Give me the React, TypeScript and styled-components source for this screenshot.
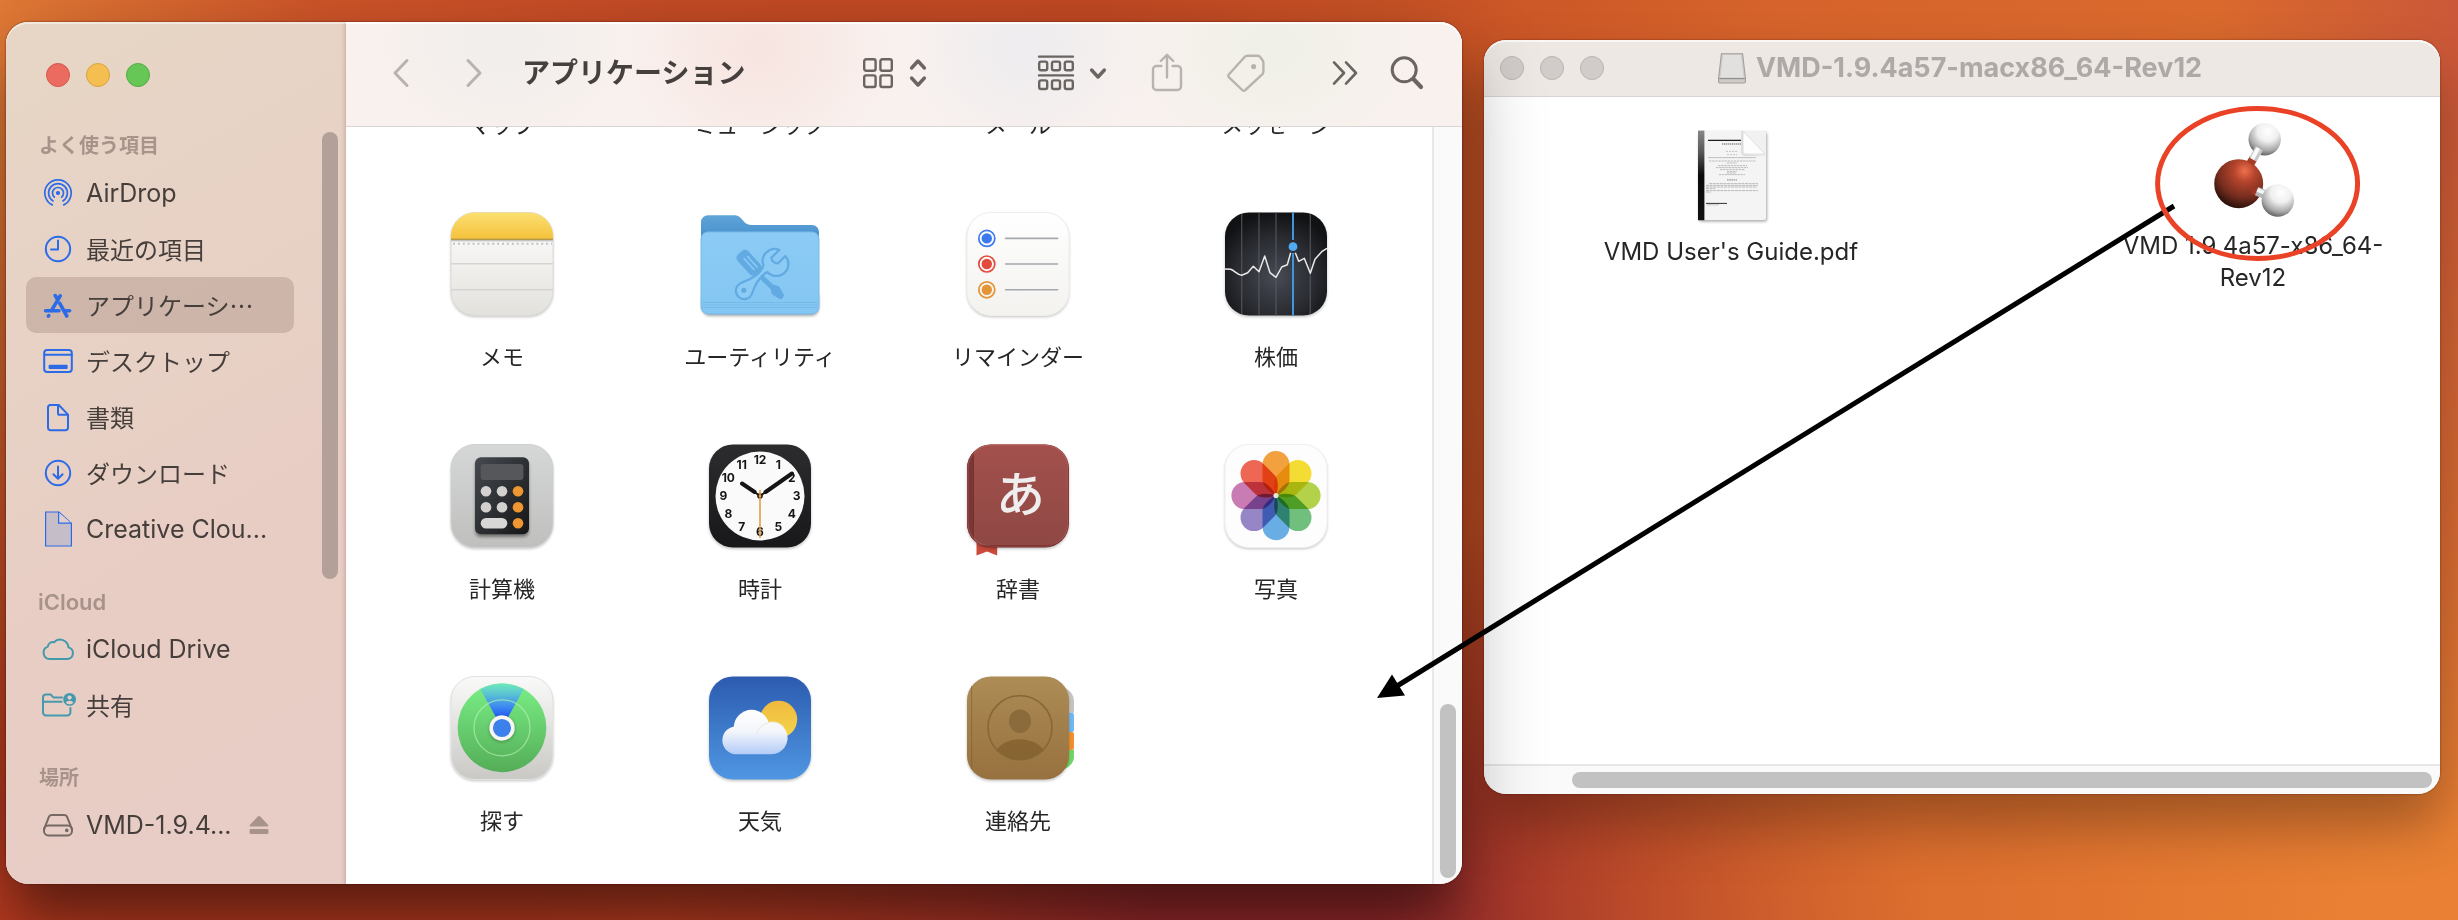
import React from "react";
import styled, { createGlobalStyle } from "styled-components";

const FONT = `Inter, "Noto Sans CJK JP", "Liberation Sans", sans-serif`;
const FONT_JP = `"Noto Sans CJK JP", sans-serif`;

const GlobalStyle = createGlobalStyle`
  *, *::before, *::after { box-sizing: border-box; }
  body { margin: 0; font-family: ${FONT}; }
  button { border: 0; padding: 0; background: none; color: inherit; font: inherit; }
  a { color: inherit; text-decoration: none; }
  h1, h2, ul { margin: 0; padding: 0; list-style: none; }
  svg { display: block; flex: none; }
`;

/* ---------- desktop and windows ---------- */

const Desktop = styled.main`
  position: relative;
  overflow: hidden;
  display: flex;
  align-items: flex-start;
  gap: 22px;
  min-height: 100vh;
  padding: 22px 18px 36px 6px;
  background:
    radial-gradient(ellipse 44% 90% at 100% 100%, #e98033 10%, rgba(224, 116, 48, 0.7) 45%, rgba(210, 98, 42, 0) 100%),
    radial-gradient(ellipse 26% 46% at 53% 102%, #93282a 25%, rgba(160, 46, 38, 0.7) 55%, rgba(180, 60, 40, 0) 100%),
    radial-gradient(ellipse 70% 86% at 8% 100%, #b63a20 20%, rgba(186, 61, 32, 0) 100%),
    linear-gradient(90deg, #e27a36 0%, #cf5529 13%, #c44a25 28%, #c24923 45%, #ca5426 59%, #d5632b 72%, #d9692d 90%, #cb5838 100%);
`;

const Window = styled.section<{ $grow: number; $front?: boolean }>`
  position: relative;
  z-index: ${(p) => (p.$front ? 1 : 0)};
  display: flex;
  flex: ${(p) => p.$grow} 1 0;
  min-width: 0;
  flex-direction: ${(p) => (p.$front ? "row" : "column")};
  margin-top: ${(p) => (p.$front ? 0 : 18)}px;
  border-radius: 22px;
  background: #fff;
  box-shadow: ${(p) =>
    p.$front
      ? "0 0 2px rgba(60, 10, 0, 0.8), 0 30px 80px rgba(0, 0, 0, 0.38), 0 44px 40px -14px rgba(0, 0, 0, 0.24)"
      : "0 0 2px rgba(60, 10, 0, 0.6), 0 32px 56px rgba(0, 0, 0, 0.3)"};
`;

const Lights = styled.div`
  display: flex;
  align-items: center;
  gap: 16px;
`;

const Light = styled.button<{ $fill: string; $edge: string }>`
  width: 24px;
  height: 24px;
  border: 1px solid ${(p) => p.$edge};
  border-radius: 50%;
  background: ${(p) => p.$fill};
`;

/* ---------- sidebar ---------- */

const Sidebar = styled.aside`
  flex: none;
  width: 340px;
  border-radius: 22px 0 0 22px;
  background: linear-gradient(150deg, #e7d6c6 0%, #e7d1c5 38%, #e8cdc4 60%, #e8cdc7 100%);
  box-shadow: inset 0 2px 0 rgba(255, 255, 255, 0.45), inset -5px 0 4px -4px rgba(120, 70, 60, 0.3);
`;

const SidebarTop = styled.div`
  display: flex;
  height: 105px;
  padding-left: 40px;
`;

const SidebarBody = styled.div`
  display: flex;
  padding: 0 8px 31px 20px;
`;

const Nav = styled.nav`
  display: flex;
  flex: 1;
  flex-direction: column;
  gap: 26px;
`;

const GroupTitle = styled.h2<{ $latin: boolean }>`
  padding-left: ${(p) => (p.$latin ? 12 : 13)}px;
  color: #a8938a;
  font-size: ${(p) => (p.$latin ? 22 : 20)}px;
  font-weight: 600;
  line-height: 38px;
`;

const SideRow = styled.li<{ $active?: boolean }>`
  display: flex;
  align-items: center;
  height: 56px;
  border-radius: 10px;
  background: ${(p) => (p.$active ? "rgba(80, 50, 35, 0.17)" : "none")};
`;

const SideLink = styled.a<{ $tint: string; $latin: boolean }>`
  display: flex;
  align-items: center;
  gap: 10px;
  padding-left: 14px;
  font-family: ${(p) => (p.$latin ? FONT : FONT_JP)};
  font-size: ${(p) => (p.$latin ? 25 : 24)}px;
  line-height: 32px;
  white-space: nowrap;
  color: #453e3b;
  svg { color: ${(p) => p.$tint}; }
`;

const Eject = styled.button`
  margin-left: 17px;
  color: #a8938a;
`;

const Thumb = styled.div<{ $tone: string }>`
  border-radius: 8px;
  background: ${(p) => p.$tone};
`;

const SideThumb = styled(Thumb)`
  width: 16px;
  height: 447px;
  margin: 5px 0 0 28px;
`;

/* ---------- toolbar and icon grid ---------- */

const Pane = styled.div`
  display: flex;
  flex: 1;
  min-width: 0;
  flex-direction: column;
`;

const Toolbar = styled.header`
  display: flex;
  align-items: center;
  height: 105px;
  padding: 0 35px 2px 31px;
  border-bottom: 1px solid #d9d5d4;
  border-radius: 0 22px 0 0;
  color: #6b6562;
  background:
    radial-gradient(ellipse 13% 110% at 14% 20%, #f1eeeb 10%, rgba(241, 238, 235, 0) 100%),
    radial-gradient(ellipse 12% 120% at 37% 25%, #f7e5e1 10%, rgba(247, 229, 225, 0) 100%),
    radial-gradient(ellipse 12% 120% at 61% 25%, #efedef 10%, rgba(239, 237, 239, 0) 100%),
    radial-gradient(ellipse 14% 120% at 83% 25%, #f0f0e8 10%, rgba(240, 240, 232, 0) 100%),
    #f9f1ee;
  box-shadow: inset 0 2px 0 rgba(255, 255, 255, 0.8);
`;

const ToolButton = styled.button<{ $width: number; $before: number; $dim?: boolean }>`
  display: flex;
  align-items: center;
  justify-content: space-between;
  flex: none;
  width: ${(p) => p.$width}px;
  height: 48px;
  margin-left: ${(p) => p.$before}px;
  color: ${(p) => (p.$dim ? "#b9b2af" : "inherit")};
  svg { margin: 0 auto; }
  svg:not(:only-child) { margin: 0; }
`;

const Title = styled.h1`
  flex: 1;
  margin-left: 24px;
  color: #45403e;
  font-size: 28px;
  font-weight: 600;
  line-height: 36px;
  white-space: nowrap;
`;

const Scroller = styled.div`
  display: flex;
  flex: 1;
  overflow: hidden;
  border-radius: 0 0 22px 0;
`;

const IconGrid = styled.ul`
  display: grid;
  flex: 1;
  grid-template-columns: repeat(4, 1fr);
  row-gap: 61px;
  margin-top: -16px;
  padding: 0 27px 49px;
`;

const Cell = styled.button`
  display: flex;
  flex-direction: column;
  align-items: center;
  gap: 15px;
  width: 100%;
  color: #262626;
  font-size: 22px;
  line-height: 28px;
`;

const Track = styled.div<{ $row?: boolean }>`
  display: flex;
  justify-content: flex-end;
  flex-direction: ${(p) => (p.$row ? "row" : "column")};
  padding: 6px;
  background: #fafafa;
`;

const TrackV = styled(Track)`
  width: 30px;
  border-left: 2px solid #e8e8e8;
`;

const TrackH = styled(Track)`
  height: 30px;
  padding: 6px 8px;
  border-top: 2px solid #e6e6e6;
  border-radius: 0 0 22px 22px;
`;

const ThumbV = styled(Thumb)`
  width: 16px;
  height: 174px;
`;

const ThumbH = styled(Thumb)`
  flex: 0 0 860px;
  height: 16px;
`;

/* ---------- disk image window ---------- */

const TitleBar = styled.header`
  display: grid;
  grid-template-columns: 1fr auto 1fr;
  align-items: center;
  height: 57px;
  padding: 0 20px 0 16px;
  border-bottom: 1px solid #d8d3d0;
  border-radius: 22px 22px 0 0;
  background: #ede8e4;
  box-shadow: inset 0 2px 0 rgba(255, 255, 255, 0.7);
`;

const DiskTitle = styled.h1`
  display: flex;
  align-items: center;
  gap: 10px;
  color: #aea9a6;
  font-size: 27px;
  font-weight: 700;
  line-height: 32px;
  white-space: nowrap;
`;

const FileArea = styled.div`
  display: flex;
  align-items: flex-start;
  justify-content: space-between;
  min-height: 667px;
  padding: 26px 51px 0 111px;
`;

const FileItem = styled.button`
  display: flex;
  flex-direction: column;
  align-items: center;
  gap: 12px;
  width: 272px;
  color: #262626;
  font-size: 24px;
  line-height: 32px;
`;

const Annotations = styled.svg`
  position: absolute;
  inset: 0;
  z-index: 2;
  width: 100%;
  height: auto;
  pointer-events: none;
`;

/* ---------- sidebar glyphs ---------- */

const Glyph = ({ children, w = 2 }: { children: React.ReactNode; w?: number }) => (
  <svg width="36" height="36" viewBox="0 0 36 36" fill="none" stroke="currentColor" strokeWidth={w} strokeLinecap="round" strokeLinejoin="round" aria-hidden="true">
    {children}
  </svg>
);

const openRing = (r: number, gap: number) => {
  const a = (gap * Math.PI) / 180;
  const dx = r * Math.sin(a);
  const dy = r * Math.cos(a);
  return `M${18 - dx} ${18 + dy}A${r} ${r} 0 1 1 ${18 + dx} ${18 + dy}`;
};

const glyphs = {
  airdrop: (
    <Glyph w={1.7}>
      <path d={openRing(13.2, 26)} />
      <path d={openRing(9.4, 32)} />
      <path d={openRing(5.5, 42)} />
      <circle cx="18" cy="18" r="1.6" fill="currentColor" stroke="none" />
      <circle cx="18" cy="18" r="1.2" fill="currentColor" />
    </Glyph>
  ),
  recent: (
    <Glyph>
      <circle cx="18" cy="18" r="12.2" />
      <path d="M18 9.5V18.6H11" />
    </Glyph>
  ),
  apps: (
    <Glyph w={3.6}>
      <path d="M20.2 8.9L11.6 23.4" />
      <path d="M15.2 8.6L17.4 12" />
      <path d="M19.6 16.2L26.8 29" />
      <path d="M5.6 23.8H19" />
      <path d="M26 23.8H29.6" />
      <path d="M8.8 28.6L8.3 29.2" />
    </Glyph>
  ),
  desktop: (
    <Glyph>
      <rect x="4.2" y="7" width="27.6" height="22" rx="3" />
      <path d="M4.4 11.8H31.6" />
      <rect x="8.6" y="21.8" width="19" height="4.2" rx="1" fill="currentColor" stroke="none" />
    </Glyph>
  ),
  doc: (
    <Glyph>
      <path d="M10.5 6H18.8L28 15.6V28.6a2.6 2.6 0 0 1-2.6 2.6H10.5A2.6 2.6 0 0 1 8 28.6V8.6A2.6 2.6 0 0 1 10.5 6Z" />
      <path d="M18 6.4V14.2a1.6 1.6 0 0 0 1.6 1.6H27.6" />
    </Glyph>
  ),
  download: (
    <Glyph>
      <circle cx="18" cy="18" r="12.2" />
      <path d="M18 11.6V23.6M13.4 19.2L18 23.8L22.6 19.2" />
    </Glyph>
  ),
  page: (
    <Glyph w={1.2}>
      <path d="M5.6 1H19L31.4 12.4V35H5.6Z" fill="#c5bdc8" strokeLinejoin="miter" />
      <path d="M18.6 1.2V12.2H31.2" fill="#dfd0d0" strokeLinejoin="miter" />
    </Glyph>
  ),
  cloud: (
    <Glyph>
      <path d="M9.6 28A6.4 6.4 0 0 1 7.8 15.6A5 5 0 0 1 14 11.2A8.4 8.4 0 0 1 28.4 16.4A5.9 5.9 0 0 1 27.6 28Z" />
    </Glyph>
  ),
  shared: (
    <Glyph>
      <path d="M22 10.4H13.4L10.8 7.6H6A3 3 0 0 0 3 10.6V25.4A3 3 0 0 0 6 28.4H27.4A3 3 0 0 0 30.4 25.4V21" />
      <path d="M3.2 14.8H21.6" />
      <circle cx="29.6" cy="12.4" r="6.4" fill="currentColor" stroke="none" />
      <circle cx="29.6" cy="10.6" r="2.1" fill="#e8cfc5" stroke="none" />
      <path d="M25.8 15.8a4 3 0 0 1 7.6 0a5.4 5.4 0 0 1-7.6 0Z" fill="#e8cfc5" stroke="none" />
    </Glyph>
  ),
  drive: (
    <Glyph>
      <path d="M4 22.4L9 9.6A3.2 3.2 0 0 1 11.8 8H24.2A3.2 3.2 0 0 1 27 9.6L32 22.4" />
      <rect x="4" y="18.4" width="28" height="10" rx="4.4" />
      <circle cx="26.8" cy="23.4" r="1" fill="currentColor" stroke="none" />
      <circle cx="26.8" cy="23.4" r="0.8" fill="currentColor" />
    </Glyph>
  ),
};

/* ---------- toolbar glyphs ---------- */

const Line = ({ w, h, s, children }: { w: number; h: number; s: number; children: React.ReactNode }) => (
  <svg width={w} height={h} viewBox={`0 0 ${w} ${h}`} fill="none" stroke="currentColor" strokeWidth={s} strokeLinecap="round" strokeLinejoin="round" aria-hidden="true">
    {children}
  </svg>
);

/* ---------- application icons, 128 unit canvas ---------- */

const AppIcon = ({ children }: { children: React.ReactNode }) => (
  <svg width="128" height="128" viewBox="0 0 128 128" aria-hidden="true">
    {children}
  </svg>
);

const Tile = ({ fill, stroke }: { fill: string; stroke?: string }) => (
  <>
    <rect x="13" y="14" width="102" height="103" rx="24" fill="#000" opacity="0.24" filter="url(#soft)" />
    <rect x="13" y="12.5" width="102" height="103" rx="24" fill={fill} stroke={stroke} />
  </>
);

const vgrad = (id: string, a: string, b: string) => (
  <linearGradient id={id} x1="0" y1="0" x2="0" y2="1">
    <stop offset="0" stopColor={a} />
    <stop offset="1" stopColor={b} />
  </linearGradient>
);

const SharedDefs = () => (
  <defs>
    <filter id="soft" x="-20%" y="-20%" width="140%" height="140%">
      <feGaussianBlur stdDeviation="1.6" />
    </filter>
    <clipPath id="tile"><rect x="13" y="12.5" width="102" height="103" rx="24" /></clipPath>
    {vgrad("noteTop", "#fbe073", "#f5c23b")}
    {vgrad("notePaper", "#ffffff", "#e3e1dc")}
    {vgrad("folderBack", "#5fa5d8", "#3379c4")}
    {vgrad("folderFront", "#8bcbf5", "#84c6f3")}
    {vgrad("white", "#ffffff", "#f3f2ef")}
    {vgrad("calc", "#d5d8d7", "#bfbfbd")}
    {vgrad("clock", "#2c2c2e", "#18181a")}
    {vgrad("dict", "#a3504c", "#8f4844")}
    {vgrad("find", "#fafafa", "#c9c8c5")}
    {vgrad("findGreen", "#7aef86", "#54ad57")}
    <linearGradient id="cone" x1="0" y1="0" x2="0" y2="1">
      <stop offset="0" stopColor="#6de9bb" />
      <stop offset="0.22" stopColor="#5cc6d0" />
      <stop offset="0.5" stopColor="#3f8ef0" />
      <stop offset="0.8" stopColor="#1d4ff0" />
    </linearGradient>
    {vgrad("weather", "#2c5bb0", "#4f97e2")}
    {vgrad("sun", "#efb93f", "#f6d54c")}
    {vgrad("book", "#ad8c55", "#97713f")}
    <linearGradient id="cloudFill" gradientUnits="userSpaceOnUse" x1="0" y1="46" x2="0" y2="90">
      <stop offset="0" stopColor="#ffffff" />
      <stop offset="0.5" stopColor="#f2f5fa" />
      <stop offset="1" stopColor="#b3ccf8" />
    </linearGradient>
    <linearGradient id="calcBody" x1="0" y1="0" x2="1" y2="1">
      <stop offset="0" stopColor="#454a50" />
      <stop offset="1" stopColor="#161617" />
    </linearGradient>
    <radialGradient id="stocks" cx="0.5" cy="0.62" r="0.62">
      <stop offset="0" stopColor="#484a55" />
      <stop offset="0.6" stopColor="#2a2c32" />
      <stop offset="1" stopColor="#111214" />
    </radialGradient>
    <radialGradient id="oxygen" cx="0.62" cy="0.24" r="0.78">
      <stop offset="0" stopColor="#f0704f" />
      <stop offset="0.28" stopColor="#b5452c" />
      <stop offset="0.7" stopColor="#742c1e" />
      <stop offset="1" stopColor="#28100a" />
    </radialGradient>
    <radialGradient id="hydrogen" cx="0.6" cy="0.25" r="0.8">
      <stop offset="0" stopColor="#ffffff" />
      <stop offset="0.4" stopColor="#efefef" />
      <stop offset="0.75" stopColor="#a8a8a8" />
      <stop offset="1" stopColor="#555555" />
    </radialGradient>
    <linearGradient id="spine" x1="0" y1="0" x2="0" y2="1">
      <stop offset="0" stopColor="#888" />
      <stop offset="0.25" stopColor="#555" />
      <stop offset="0.5" stopColor="#0a0a0a" />
      <stop offset="1" stopColor="#111" />
    </linearGradient>
  </defs>
);

const Notes = () => (
  <AppIcon>
    <Tile fill="url(#notePaper)" stroke="#dddbd8" />
    <g clipPath="url(#tile)">
      <rect x="13" y="12" width="102" height="27" fill="url(#noteTop)" />
      <rect x="13" y="38.6" width="102" height="1.6" fill="#b59a4a" />
      <rect x="13" y="40" width="102" height="1.4" fill="#c4c4c6" />
      <path d="M15 43.8H114" stroke="#c4c3c0" strokeWidth="2" strokeDasharray="2 2.9" />
      <path d="M13 63.8H115M13 89.8H115" stroke="#d5d4d4" strokeWidth="1.6" />
    </g>
  </AppIcon>
);

const Utilities = () => (
  <AppIcon>
    <rect x="6" y="90" width="117" height="26" rx="8" fill="#000" opacity="0.35" filter="url(#soft)" />
    <path d="M12 15.3H39C46 15.3 47 25 55 25H116a7 7 0 0 1 7 7V60H5V22.3a7 7 0 0 1 7-7Z" fill="url(#folderBack)" />
    <path d="M12 32H116a7 7 0 0 1 7 7V107a7 7 0 0 1-7 7H12a7 7 0 0 1-7-7V39a7 7 0 0 1 7-7Z" fill="url(#folderFront)" stroke="#77bceb" strokeWidth="1" />
    <path d="M6 102.5H122M6 105H122M6 107.5H122" stroke="#70b5e4" strokeWidth="0.9" opacity="0.8" />
    <rect x="39.5" y="55.5" width="27" height="14.5" rx="4.5" fill="#62aae2" transform="rotate(48 53 62.8)" />
    <path d="M48 58.5L58 69.6M51.6 56.6L61 67" stroke="#8ccbf4" strokeWidth="1.5" strokeLinecap="round" />
    <path d="M65 76.5L77 88" stroke="#62aae2" strokeWidth="5" />
    <path d="M74.6 87.4L78 84.8L83 86.2L88.2 95.4L86 99L83.6 99L75.6 94Z" fill="#62aae2" />
    <path d="M83.3 50A12 12 0 0 0 67.4 65.2C66 71 60 76 54 79L44 83.6A8.3 8.3 0 1 0 56.2 93C59 85 64 76 71.4 72A12 12 0 0 0 89.3 56L82 63.4L79 63L76 60.4L75.4 57.6Z" fill="#8ccbf4" stroke="#62aae2" strokeWidth="2.2" strokeLinejoin="round" />
    <circle cx="47.8" cy="90.3" r="2.6" fill="#62aae2" />
  </AppIcon>
);

const Reminders = () => (
  <AppIcon>
    <Tile fill="url(#white)" stroke="#efeeec" />
    {[["#3b79f0", 38.4], ["#e34a3c", 64], ["#e49434", 89.8]].map(([c, y]) => (
      <g key={c}>
        <circle cx="32.8" cy={y} r="8" fill="none" stroke={c as string} strokeWidth="1.7" />
        <circle cx="32.8" cy={y} r="5.2" fill={c as string} />
        <path d={`M51.6 ${y}H103.6`} stroke="#a4a8ac" strokeWidth="1.6" strokeLinecap="round" />
      </g>
    ))}
  </AppIcon>
);

const Stocks = () => (
  <AppIcon>
    <Tile fill="url(#stocks)" />
    <g clipPath="url(#tile)" fill="none">
      <path d="M29.7 12V116M47 12V116M64 12V116M98.3 12V116" stroke="#5a5c63" strokeWidth="1.4" opacity="0.7" />
      <path d="M81 12V40M81 53V116" stroke="#3f96dc" strokeWidth="2" />
      <path d="M13 69L18.7 69.3C23 71 25 74.6 29.7 75.3L35.7 72.7L41.3 66.3L47 71.7L52.7 56L58 72.7L64 77.3L69.7 67L75.3 64.7L78.7 52.7M83.3 52.7L86.7 61.3L92.3 58.3L98.3 73.3L103 59.3L109.7 51.7L115 48.3" stroke="#e9e9ea" strokeWidth="1.5" strokeLinejoin="round" />
    </g>
    <circle cx="81" cy="46.7" r="4.4" fill="#51a9f2" />
  </AppIcon>
);

const Calculator = () => (
  <AppIcon>
    <Tile fill="url(#calc)" stroke="#cfd1d0" />
    <rect x="37" y="28" width="54" height="77" rx="6" fill="#000" opacity="0.4" filter="url(#soft)" />
    <rect x="37" y="25.3" width="54" height="77" rx="6" fill="url(#calcBody)" />
    <rect x="42.7" y="32" width="42.7" height="16" rx="3" fill="#55575a" />
    {[48, 64].map((x) => [59.3, 75.3].map((y) => <circle key={`${x}-${y}`} cx={x} cy={y} r="5.3" fill="#d2d1cf" />))}
    {[59.3, 75.3, 91.3].map((y) => <circle key={y} cx="80" cy={y} r="5.3" fill="#ee9632" />)}
    <rect x="42.7" y="86" width="26.6" height="10.6" rx="5.3" fill="#d8d7d5" />
  </AppIcon>
);

const Clock = () => (
  <AppIcon>
    <Tile fill="url(#clock)" />
    <circle cx="64" cy="64" r="44.5" fill="#fafafa" />
    <g fontFamily={FONT} fontSize="12" fontWeight="700" fill="#151515" textAnchor="middle">
      {Array.from({ length: 12 }, (_, i) => {
        const a = ((i + 1) * Math.PI) / 6;
        return <text key={i} x={64 + 36.6 * Math.sin(a)} y={68.3 - 36 * Math.cos(a)}>{i + 1}</text>;
      })}
    </g>
    <path d="M64 64L58 59.6M64 64L70 59.7" stroke="#151515" strokeWidth="2" />
    <path d="M58.6 60L46 51.5M69.6 60L96 41.5" stroke="#151515" strokeWidth="4" strokeLinecap="round" />
    <circle cx="64" cy="64" r="2.8" fill="#151515" />
    <path d="M64 58V106" stroke="#e39a3c" strokeWidth="1.5" />
    <circle cx="64" cy="64" r="1.5" fill="#e39a3c" />
  </AppIcon>
);

const Dictionary = () => (
  <AppIcon>
    <path d="M22.5 108H43.2V123.4L33 119.6L22.5 123.4Z" fill="#cc4a3c" />
    <Tile fill="#722d2d" />
    <g clipPath="url(#tile)">
      <path d="M20 12H91Q114 12 114 36V90Q114 113 91 113H20Z" fill="url(#dict)" />
      <rect x="13" y="12" width="6.5" height="104" fill="#7a3636" />
    </g>
    <rect x="14" y="13.2" width="100" height="101" rx="23.4" fill="none" stroke="#d0706a" strokeWidth="0.8" opacity="0.5" />
    <text x="66.5" y="80" fontFamily={FONT_JP} fontSize="49" fontWeight="500" fill="#efeeee" textAnchor="middle">あ</text>
  </AppIcon>
);

const petals = ["#f3a13f", "#f3dd35", "#b3d24a", "#70bf7c", "#68aee4", "#9786c6", "#c97bb3", "#ee6654"];

const Petals = styled.g`
  isolation: isolate;
  path { mix-blend-mode: multiply; }
`;

const PhotosIcon = () => (
  <AppIcon>
    <Tile fill="#fdfdfd" stroke="#f0f0f0" />
    <Petals>
      {petals.map((c, i) => (
        <path key={c} d="M50.5 32.5a13.5 13.5 0 0 1 27 0V48.5C77.5 54 70 61 64 63.6C58 61 50.5 54 50.5 48.5Z" fill={c} transform={`rotate(${i * 45} 64 63.6)`} />
      ))}
    </Petals>
    <circle cx="64" cy="63.6" r="2.6" fill="#e9e2d8" />
  </AppIcon>
);

const FindMy = () => (
  <AppIcon>
    <Tile fill="url(#find)" stroke="#e3e3e2" />
    <circle cx="64" cy="63.8" r="44.4" fill="url(#findGreen)" />
    <path d="M64 64L42.4 25.2A44.4 44.4 0 0 1 85.6 25.2Z" fill="url(#cone)" />
    <circle cx="64" cy="63.8" r="28" fill="none" stroke="#b8f5b5" strokeWidth="1.2" opacity="0.65" />
    <circle cx="64" cy="65" r="13" fill="#000" opacity="0.25" filter="url(#soft)" />
    <circle cx="64" cy="64" r="10.9" fill="#3c80ec" stroke="#f7f6f5" strokeWidth="3.6" />
  </AppIcon>
);

const Weather = () => (
  <AppIcon>
    <Tile fill="url(#weather)" />
    <circle cx="82.6" cy="55.3" r="18.6" fill="url(#sun)" />
    <g fill="url(#cloudFill)">
      <circle cx="55.6" cy="63.6" r="17.8" />
      <path d="M42 62.4A14 14 0 1 0 42 90.2H75.5A16.2 16.2 0 1 0 66 60.8Z" />
    </g>
    <path d="M61 70A16 16 0 0 1 88 63" fill="none" stroke="#e9e6cf" strokeWidth="1" opacity="0.8" />
  </AppIcon>
);

const Contacts = () => (
  <AppIcon>
    <path d="M106 22Q120 26 120 38V49H106Z" fill="#c6c4c1" />
    <rect x="106" y="49" width="14" height="19" rx="2" fill="#6db9f2" />
    <rect x="106" y="68" width="14" height="18" rx="2" fill="#f0912f" />
    <path d="M106 86H120V94Q119 102 108 106Z" fill="#72d468" />
    <Tile fill="url(#book)" />
    <path d="M17.6 22V105" stroke="#7d5c32" strokeWidth="1.2" opacity="0.5" />
    <circle cx="66" cy="63.7" r="32" fill="none" stroke="#876738" strokeWidth="1.6" />
    <ellipse cx="66" cy="57.2" rx="11" ry="11.8" fill="#8b6a3b" />
    <path d="M43 85.5A25.5 18 0 0 1 89 85.5A32 32 0 0 1 43 85.5Z" fill="#84622f" opacity="0.85" />
  </AppIcon>
);

const GuidePdf = () => (
  <svg width="80" height="101" viewBox="0 0 80 101" aria-hidden="true">
    <rect x="8" y="9.5" width="68" height="89" rx="2" fill="#000" opacity="0.35" filter="url(#soft)" />
    <path d="M7 8H73Q75 8 75 10V95Q75 97 73 97H7Z" fill="#f4f4f4" />
    <rect x="7" y="7.6" width="6.4" height="89.6" fill="url(#spine)" />
    <path d="M17 17.4H52" stroke="#1c1c1c" strokeWidth="1.2" />
    <path d="M31 21H51" stroke="#aaa" strokeWidth="1.8" strokeDasharray="1.4 0.6" />
    <path d="M35 28.4H47M36 31.6H46" stroke="#c6c6c6" strokeDasharray="2 1" />
    <path d="M17 34.6H65" stroke="#aaa" strokeWidth="0.7" />
    <path d="M18 38H65M36 40H46M27 42.6H56M25 44.6H57M29 46.6H54M36 48.6H46M36 50H45M28 51.6H54" stroke="#b4b4b4" strokeWidth="0.9" strokeDasharray="2.4 0.7" />
    <path d="M36 56.8H46" stroke="#999" strokeWidth="1.3" strokeDasharray="1.6 0.6" />
    <path d="M18 60.6H67M15 62.4H67M15 64H66M15 65.6H24M15 67.6H67M15 69H20" stroke="#b4b4b4" strokeWidth="0.9" strokeDasharray="3 0.6" />
    <path d="M15 80.4H36" stroke="#1c1c1c" strokeWidth="0.9" />
    <path d="M16 81.8H28" stroke="#bbb" strokeWidth="0.8" />
    <path d="M50 8H75V33H54Q50 33 50 29Z" fill="#dedede" />
    <path d="M52 8H73Q75 8 75 10V33L52 31Z" fill="#f1f1f1" />
    <path d="M52 8L74 31H54.5Q52 31 52 28.5Z" fill="#fdfdfd" stroke="#d8d8d8" strokeWidth="0.8" />
  </svg>
);

const Molecule = () => (
  <svg width="96" height="95" viewBox="0 0 96 95" aria-hidden="true">
    <circle cx="33.7" cy="60.7" r="24.5" fill="url(#oxygen)" />
    <circle cx="59.7" cy="16.2" r="16.2" fill="url(#hydrogen)" />
    <path d="M45.4 40.6L48.6 35" stroke="#a83c26" strokeWidth="8.4" />
    <path d="M48 36.6L54.2 25.4" stroke="#c9c9c9" strokeWidth="8.4" />
    <path d="M47.2 36L53.4 25" stroke="#fafafa" strokeWidth="4" />
    <path d="M47.6 66.6L53 68.8" stroke="#9c3622" strokeWidth="8.4" />
    <path d="M51.6 68.2L60 71.6" stroke="#b5b5b5" strokeWidth="9" />
    <path d="M52.4 66.8L60 70" stroke="#f5f5f5" strokeWidth="4" />
    <circle cx="72.8" cy="77.5" r="16.2" fill="url(#hydrogen)" />
  </svg>
);

const DiskGlyph = () => (
  <svg width="28" height="31" viewBox="0 0 28 31" aria-hidden="true">
    <path d="M3.4 0.8H24.6L27.4 25V28.6Q27.4 30 26 30H2Q0.6 30 0.6 28.6V25Z" fill="#cfcbc9" stroke="#a39f9d" strokeWidth="1.1" />
    <path d="M5 2H23L25.4 24.6H2.6Z" fill="#e2dfdf" />
    <path d="M1.2 25.6H26.8" stroke="#8f8b89" strokeWidth="1.1" />
  </svg>
);

/* ---------- data ---------- */

const BLUE = "#2c6be8";
const TEAL = "#4599ac";

const isLatin = (s: string) => /^[A-Za-z]/.test(s);

type Entry = { label: string; glyph: keyof typeof glyphs; active?: boolean; eject?: boolean };

const groups: { title: string; tint: string; items: Entry[] }[] = [
  {
    title: "よく使う項目",
    tint: BLUE,
    items: [
      { label: "AirDrop", glyph: "airdrop" },
      { label: "最近の項目", glyph: "recent" },
      { label: "アプリケーシ…", glyph: "apps", active: true },
      { label: "デスクトップ", glyph: "desktop" },
      { label: "書類", glyph: "doc" },
      { label: "ダウンロード", glyph: "download" },
      { label: "Creative Clou...", glyph: "page" },
    ],
  },
  {
    title: "iCloud",
    tint: TEAL,
    items: [
      { label: "iCloud Drive", glyph: "cloud" },
      { label: "共有", glyph: "shared" },
    ],
  },
  { title: "場所", tint: "#756964", items: [{ label: "VMD-1.9.4...", glyph: "drive", eject: true }] },
];

const apps: { label: string; Icon?: () => React.JSX.Element }[] = [
  { label: "マップ" },
  { label: "ミュージック" },
  { label: "メール" },
  { label: "メッセージ" },
  { label: "メモ", Icon: Notes },
  { label: "ユーティリティ", Icon: Utilities },
  { label: "リマインダー", Icon: Reminders },
  { label: "株価", Icon: Stocks },
  { label: "計算機", Icon: Calculator },
  { label: "時計", Icon: Clock },
  { label: "辞書", Icon: Dictionary },
  { label: "写真", Icon: PhotosIcon },
  { label: "探す", Icon: FindMy },
  { label: "天気", Icon: Weather },
  { label: "連絡先", Icon: Contacts },
];

/* ---------- page ---------- */

export default function App() {
  return (
    <Desktop>
      <GlobalStyle />
      <Window $grow={1456} $front aria-label="アプリケーション">
        <Sidebar>
          <SidebarTop>
            <Lights>
              <Light $fill="#ec6b60" $edge="#d4584d" aria-label="閉じる" />
              <Light $fill="#f4bf50" $edge="#d9a33d" aria-label="しまう" />
              <Light $fill="#66c656" $edge="#52ad43" aria-label="拡大" />
            </Lights>
          </SidebarTop>
          <SidebarBody>
            <Nav>
              {groups.map((g) => (
                <section key={g.title}>
                  <GroupTitle $latin={isLatin(g.title)}>{g.title}</GroupTitle>
                  <ul>
                    {g.items.map((it) => (
                      <SideRow key={it.label} $active={it.active}>
                        <SideLink
                          href="#"
                          $tint={g.tint}
                          $latin={isLatin(it.label)}
                          aria-current={it.active ? "page" : undefined}
                        >
                          {glyphs[it.glyph]}
                          {it.label}
                        </SideLink>
                        {it.eject && (
                          <Eject aria-label="取り出す">
                            <svg width="20" height="20" viewBox="0 0 20 20" fill="currentColor" aria-hidden="true">
                              <path d="M8.8 1.6Q10 0.4 11.2 1.6L19 9.8Q19.8 11.6 18.4 11.6H1.6Q0.2 11.6 1 9.8Z" />
                              <rect x="0.6" y="14" width="18.8" height="5" rx="1.2" />
                            </svg>
                          </Eject>
                        )}
                      </SideRow>
                    ))}
                  </ul>
                </section>
              ))}
            </Nav>
            <SideThumb $tone="#b3a199" />
          </SidebarBody>
        </Sidebar>

        <Pane>
          <Toolbar>
            <ToolButton $width={48} $before={0} $dim aria-label="戻る">
              <Line w={20} h={32} s={3}><path d="M16 3.5L4 16L16 28.5" /></Line>
            </ToolButton>
            <ToolButton $width={48} $before={25} $dim aria-label="進む">
              <Line w={20} h={32} s={3}><path d="M4 3.5L16 16L4 28.5" /></Line>
            </ToolButton>
            <Title>アプリケーション</Title>
            <ToolButton $width={65} $before={0} aria-label="表示">
              <Line w={32} h={32} s={2.4}>
                <rect x="2.2" y="2.2" width="11.4" height="11.6" rx="2" />
                <rect x="18.4" y="2.2" width="11.4" height="11.6" rx="2" />
                <rect x="2.2" y="18.4" width="11.4" height="11.6" rx="2" />
                <rect x="18.4" y="18.4" width="11.4" height="11.6" rx="2" />
              </Line>
              <Line w={18} h={30} s={3.4}><path d="M2.6 10L9 3L15.4 10M2.6 20L9 27L15.4 20" /></Line>
            </ToolButton>
            <ToolButton $width={70} $before={110} aria-label="グループ">
              <Line w={38} h={38} s={2.4}>
                <path d="M2 2.6H36M2 21.4H36" />
                {[2.2, 15, 27.8].map((x) =>
                  [7.6, 26.4].map((y) => <rect key={`${x}-${y}`} x={x} y={y} width="8" height="8.6" rx="1.8" />)
                )}
              </Line>
              <Line w={18} h={14} s={3.4}><path d="M2.6 4L9 11L15.4 4" /></Line>
            </ToolButton>
            <ToolButton $width={40} $before={40} $dim aria-label="共有">
              <Line w={32} h={42} s={2.4}>
                <path d="M10.4 14H5.4A3.4 3.4 0 0 0 2 17.4V34.6A3.4 3.4 0 0 0 5.4 38H26.6A3.4 3.4 0 0 0 30 34.6V17.4A3.4 3.4 0 0 0 26.6 14H21.6" />
                <path d="M16 25.4V3M9.8 9L16 2.8L22.2 9" />
              </Line>
            </ToolButton>
            <ToolButton $width={42} $before={38} $dim aria-label="タグ">
              <Line w={40} h={40} s={2.4}>
                <path d="M21.6 2.8H31.6Q33 2.8 34 3.8L36.4 7Q37.4 8.2 37.4 9.6V18.4Q37.4 20 36.2 21.4L19.4 37Q17.8 38.6 16.2 37L3 24.4Q1.6 22.8 3 21.2L18.4 4.2Q19.8 2.8 21.6 2.8Z" />
                <circle cx="27.6" cy="13.6" r="1.4" fill="currentColor" />
              </Line>
            </ToolButton>
            <ToolButton $width={40} $before={58} aria-label="さらに表示">
              <Line w={28} h={26} s={2.6}><path d="M3 2.4L13 13L3 23.6M15 2.4L25 13L15 23.6" /></Line>
            </ToolButton>
            <ToolButton $width={40} $before={22} aria-label="検索">
              <Line w={34} h={34} s={3}>
                <circle cx="14.2" cy="13.8" r="12" />
                <path d="M23.4 23L31 31" strokeWidth="4.2" />
              </Line>
            </ToolButton>
          </Toolbar>
          <Scroller>
            <IconGrid>
              {apps.map(({ label, Icon }) => (
                <li key={label}>
                  <Cell>
                    {Icon && <Icon />}
                    <span>{label}</span>
                  </Cell>
                </li>
              ))}
            </IconGrid>
            <TrackV>
              <ThumbV $tone="#c2c2c2" />
            </TrackV>
          </Scroller>
        </Pane>
      </Window>

      <Window $grow={956} aria-label="VMD-1.9.4a57-macx86_64-Rev12">
        <TitleBar>
          <Lights>
            <Light $fill="#d1ccc9" $edge="#b9b4b1" aria-label="閉じる" />
            <Light $fill="#d1ccc9" $edge="#b9b4b1" aria-label="しまう" />
            <Light $fill="#d1ccc9" $edge="#b9b4b1" aria-label="拡大" />
          </Lights>
          <DiskTitle>
            <DiskGlyph />
            VMD-1.9.4a57-macx86_64-Rev12
          </DiskTitle>
        </TitleBar>
        <FileArea>
          <FileItem>
            <GuidePdf />
            <span>VMD User's Guide.pdf</span>
          </FileItem>
          <FileItem>
            <Molecule />
            <span>VMD 1.9.4a57-x86_64-<br />Rev12</span>
          </FileItem>
        </FileArea>
        <TrackH $row>
          <ThumbH $tone="#c2c2c2" />
        </TrackH>
      </Window>

      <Annotations viewBox="0 0 2458 920" aria-hidden="true">
        <SharedDefs />
        <path d="M2174 206L1397 686" stroke="#000" strokeWidth="5" />
        <path d="M1377 698L1392 674.5L1405 695.6Z" fill="#000" />
        <ellipse cx="2257.6" cy="183.4" rx="100" ry="75" fill="none" stroke="#e94226" strokeWidth="5" />
      </Annotations>
    </Desktop>
  );
}
